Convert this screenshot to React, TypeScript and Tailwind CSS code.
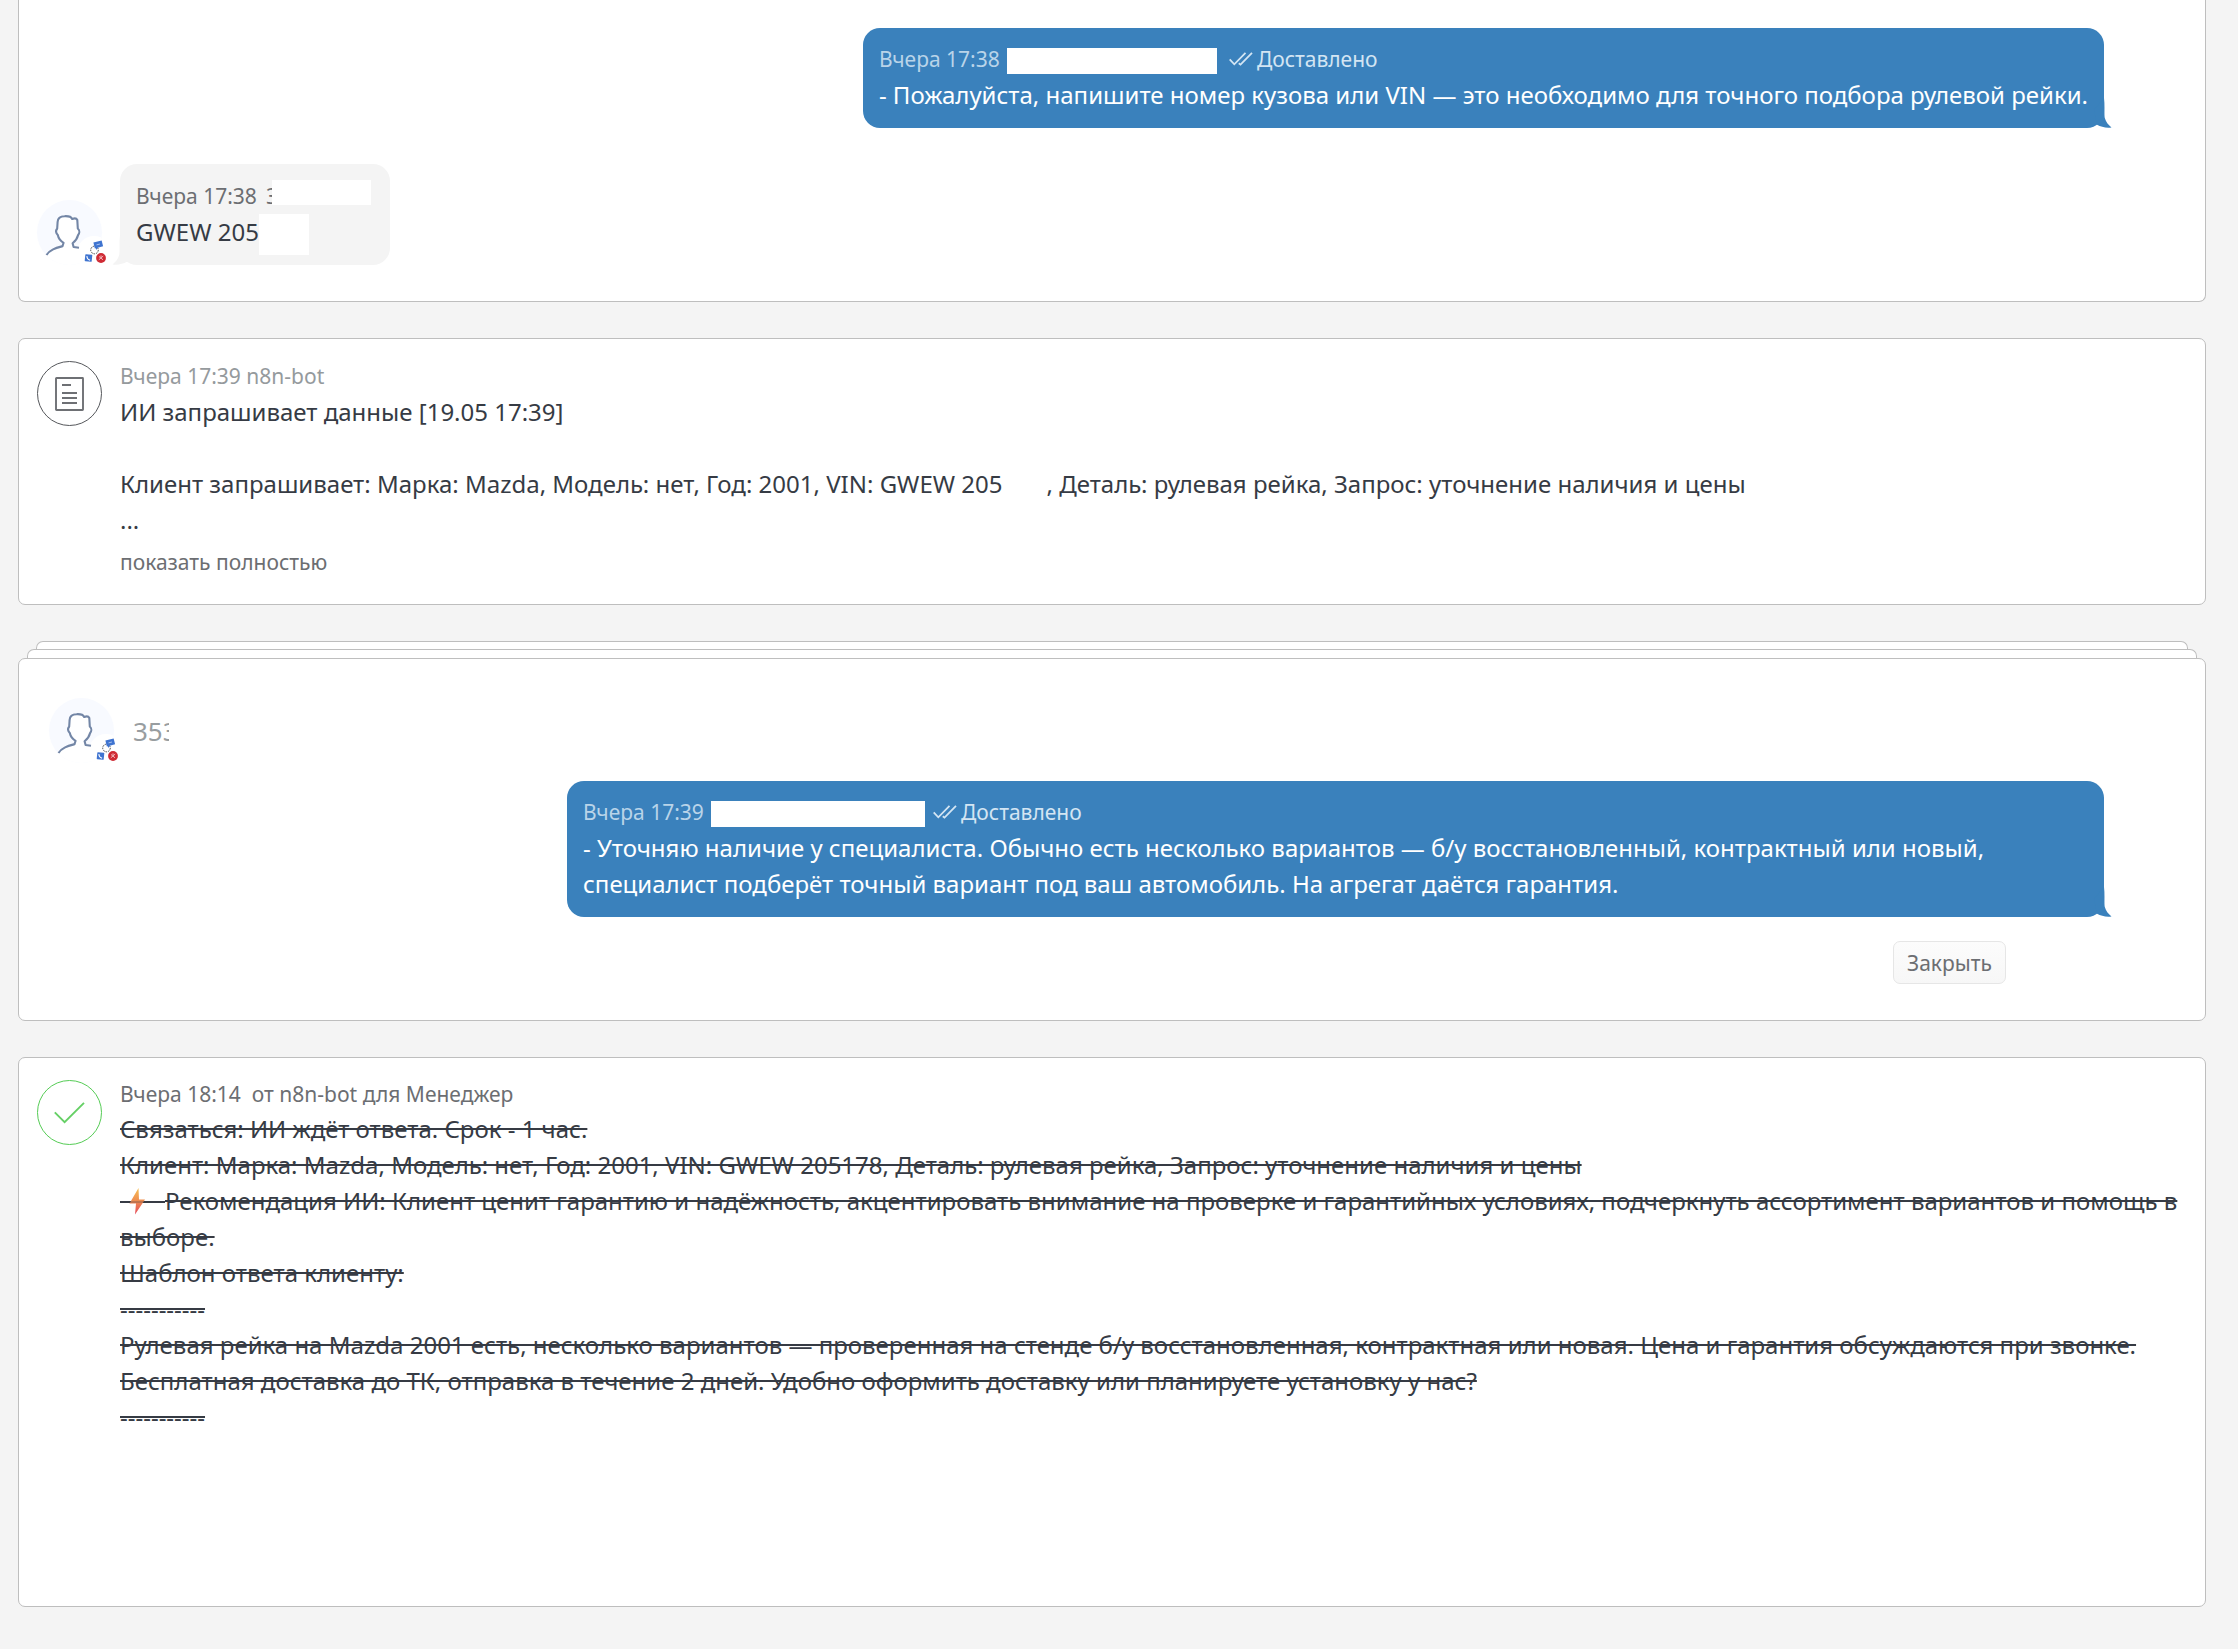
import type { ReactNode } from "react";

const CARD = "border border-[#bebebe] bg-white";

function Avatar() {
  return (
    <svg viewBox="0 0 70 65" className="h-[65px] w-[70px] shrink-0 overflow-visible" aria-hidden="true">
      <defs>
        <clipPath id="avatar-disc">
          <circle cx="32.5" cy="32.5" r="32.5" />
        </clipPath>
      </defs>
      <circle cx="32.5" cy="32.5" r="32.5" fill="#f8faff" />
      <g clipPath="url(#avatar-disc)">
        <path
          d="M9 55C13 49 20 48 26 46L26.5 43C23 41 21 38 20.5 34C18 31 19 29 20 28C20 22 20 16 28 16H35L40.500 19V28C43 30 43 33 41 35C40 39 38 41 35.500 43L36.500 47L46 49L66 66H9Z"
          fill="#fff"
        />
        <circle cx="57" cy="53" r="17" fill="#fff" />
      </g>
      <path
        d="M9.500 55C13 49.500 19 48 25.500 46.200L26.600 42.800C23.500 41 21.500 38.500 20.800 35C18.800 33 18.700 30.500 20.200 28.500L20.600 22C20.800 17.500 23.500 16.200 27.500 16.200C31 16 34 16.200 35.200 19C37 18.300 39.500 18.300 40.300 20L40.800 28.500C43 30.500 42.500 33.500 41 35.200C40.300 38.500 38.300 41 35.600 43.200L36.600 47L42 47.800"
        fill="none"
        stroke="#7386a6"
        strokeWidth="2.100"
        strokeLinejoin="round"
      />
      <circle cx="57.500" cy="50" r="3.800" fill="#fff" stroke="#333" strokeWidth="0.900" strokeDasharray="1.600 1" />
      <g transform="rotate(-14 61 44.500)">
        <path d="M57 41.500H65.500V47.500H60L58 49.500V47.500H57Z" fill="#3f74d0" />
        <path d="M59.500 44.500H63" stroke="#a9c2ee" strokeWidth="0.900" />
      </g>
      <g transform="rotate(6 51.500 58)">
        <rect x="48" y="54.500" width="7" height="7" rx="0.600" fill="#3f74d0" />
        <path d="M49.800 56.300C50 58.600 51.300 59.800 53.300 60" fill="none" stroke="#fff" strokeWidth="1.200" />
      </g>
      <circle cx="64" cy="58" r="4.900" fill="#cf2a34" />
      <path d="M61.800 59.800L66.200 56M62 56.500L66 59.800M64 55.400V57" stroke="#f4c5c8" strokeWidth="0.900" />
    </svg>
  );
}

function Tail({ side }: { side: "left" | "right" }) {
  return (
    <svg
      viewBox="0 0 24 30"
      aria-hidden="true"
      className={
        side === "right"
          ? "absolute -right-2 bottom-0 h-[30px] w-6 fill-[#3a81bc]"
          : "absolute bottom-0 -left-2 h-[30px] w-6 -scale-x-100 fill-[#f4f4f4]"
      }
    >
      <path d="M6 12L16 0C17 8 16 16 16.800 20C18 24 20 26.500 23.500 29.500C18 30.200 13 29 9 26.800Z" />
    </svg>
  );
}

function Delivered() {
  return (
    <span className="flex items-center gap-1 text-[#d3e5f3]">
      <svg viewBox="0 0 24 14" className="h-[14px] w-6 fill-none stroke-current" strokeWidth="1.800" aria-hidden="true">
        <path d="M0.700 7.300L5.300 12.300L16.500 0.800M9.800 11.200L11.500 12.600L23 0.800" />
      </svg>
      Доставлено
    </span>
  );
}

function OutgoingBubble({ time, mask, children }: { time: string; mask: ReactNode; children: ReactNode }) {
  return (
    <div className="relative mr-[101px] ml-auto w-fit max-w-[1537px] rounded-[17px] bg-[#3a81bc] px-4 pt-[13px] pb-[15px] text-white">
      <div className="flex h-9 text-[21px] leading-9 text-[#b9d4e9]">
        <span className="w-32">{time}</span>
        {mask}
        <Delivered />
      </div>
      <p>{children}</p>
      <Tail side="right" />
    </div>
  );
}

export default function App() {
  return (
    <main className="min-h-screen bg-[#f4f4f4] pr-8 pb-[42px] pl-[18px] font-['Noto_Sans',sans-serif] text-[24px] leading-9 text-[#363b44]">
      <section className={`${CARD} rounded-b-[7px] border-t-0 pt-7 pb-9 pl-[18px]`}>
        <OutgoingBubble time="Вчера 17:38" mask={<span className="mr-3 mb-[3px] h-[26px] w-[210px] self-end bg-white" />}>
          - Пожалуйста, напишите номер кузова или VIN — это необходимо для точного подбора рулевой рейки.
        </OutgoingBubble>

        <div className="mt-9 flex items-end gap-[13px]">
          <Avatar />
          <div className="relative w-[270px] rounded-[17px] bg-[#f4f4f4] px-4 pt-[14px] pb-[15px]">
            <div className="flex h-9 text-[21px] text-[#6c6e72]">
              <span className="w-[130px]">Вчера 17:38</span>
              <span className="w-[6px] overflow-hidden">3</span>
              <span className="mb-[9px] h-[25px] w-[99px] self-end bg-white" />
            </div>
            <div className="flex h-9">
              <span className="w-[123px] overflow-hidden whitespace-nowrap">GWEW 205</span>
              <span className="h-[41px] w-[50px] bg-white" />
            </div>
            <Tail side="left" />
          </div>
        </div>
      </section>

      <section className={`${CARD} mt-9 flex gap-[18px] rounded-[7px] px-[18px] pt-[19px] pb-6`}>
        <span className="mt-[3px] flex size-[65px] shrink-0 items-center justify-center rounded-full border border-[#55575b]">
          <svg viewBox="0 0 29 34" className="h-[34px] w-[29px] fill-none stroke-[#6e7074]" strokeWidth="1.900" aria-hidden="true">
            <rect x="1" y="1" width="27" height="32" rx="0.500" />
            <path d="M7 8H16M7 16H22M7 21H22M7 26H22" />
          </svg>
        </span>
        <div className="min-w-0">
          <div className="text-[21px] text-[#959a9d]">Вчера 17:39 n8n-bot</div>
          <p>ИИ запрашивает данные [19.05 17:39]</p>
          <p className="mt-9">
            Клиент запрашивает: Марка: Mazda, Модель: нет, Год: 2001, VIN: GWEW 205
            <span className="inline-block w-11" />, Деталь: рулевая рейка, Запрос: уточнение наличия и цены
          </p>
          <p>...</p>
          <button type="button" className="mt-[6px] block cursor-pointer text-[21px] text-[#6c6e72]">
            показать полностью
          </button>
        </div>
      </section>

      <div className="mx-[18px] mt-9 h-2 rounded-t-[7px] border border-b-0 border-[#bebebe] bg-white" />
      <div className="mx-[9px] h-[9px] rounded-t-[7px] border border-b-0 border-[#bebebe] bg-white" />
      <section className={`${CARD} rounded-[7px] pt-[39px] pb-9`}>
        <div className="mb-[18px] ml-[30px] flex items-center gap-[14px]">
          <Avatar />
          <span className="w-9 overflow-hidden text-[26px] text-[#989da0]">353</span>
        </div>
        <OutgoingBubble time="Вчера 17:39" mask={<span className="mr-2 mb-[3px] h-[26px] w-[214px] self-end bg-white" />}>
          - Уточняю наличие у специалиста. Обычно есть несколько вариантов — б/у восстановленный, контрактный или новый,
          специалист подберёт точный вариант под ваш автомобиль. На агрегат даётся гарантия.
        </OutgoingBubble>
        <button
          type="button"
          className="mt-6 mr-[199px] ml-auto block h-[43px] w-[113px] cursor-pointer rounded-[7px] border border-[#e6e6e6] bg-linear-to-b from-[#fcfcfc] to-[#f7f7f7] text-[21px] text-[#6c6e72]"
        >
          Закрыть
        </button>
      </section>

      <section className={`${CARD} mt-9 flex gap-[18px] rounded-[7px] pt-5 pr-6 pb-[171px] pl-[18px]`}>
        <span className="mt-[2px] flex size-[65px] shrink-0 items-center justify-center rounded-full border border-[#55cc55]">
          <svg viewBox="0 0 31 22" className="h-[22px] w-[31px] fill-none stroke-[#66d066]" strokeWidth="1.900" aria-hidden="true">
            <path d="M0.800 10.300L10.600 20.200L30 0.800" />
          </svg>
        </span>
        <div className="min-w-0">
          <div className="text-[21px] leading-[33px] whitespace-pre text-[#6c6e72]">{"Вчера 18:14  от n8n-bot для Менеджер"}</div>
          <div className="line-through decoration-2">
            <p>Связаться: ИИ ждёт ответа. Срок - 1 час.</p>
            <p>Клиент: Марка: Mazda, Модель: нет, Год: 2001, VIN: GWEW 205178, Деталь: рулевая рейка, Запрос: уточнение наличия и цены</p>
            <p>
              <svg viewBox="0 0 45 36" className="inline-block h-9 w-[45px] align-bottom" aria-label="Молния" role="img">
                <defs>
                  <linearGradient id="bolt" x1="0" y1="0" x2="0" y2="1">
                    <stop offset="0" stopColor="#f7c052" />
                    <stop offset="0.500" stopColor="#ee8a50" />
                    <stop offset="1" stopColor="#e5485a" />
                  </linearGradient>
                </defs>
                <path d="M0 19H45" stroke="#363b44" strokeWidth="2" />
                <path d="M18.500 5L9.500 20.500H16L15 31.500L25 16.500H19Z" fill="url(#bolt)" />
                <path d="M9 19H25" stroke="#363b44" strokeOpacity="0.500" strokeWidth="1" />
              </svg>
              Рекомендация ИИ: Клиент ценит гарантию и надёжность, акцентировать внимание на проверке и гарантийных условиях,
              подчеркнуть ассортимент вариантов и помощь в выборе.
            </p>
            <p>Шаблон ответа клиенту:</p>
            <p>-----------</p>
            <p>
              Рулевая рейка на Mazda 2001 есть, несколько вариантов — проверенная на стенде б/у восстановленная, контрактная или
              новая. Цена и гарантия обсуждаются при звонке.
            </p>
            <p>Бесплатная доставка до ТК, отправка в течение 2 дней. Удобно оформить доставку или планируете установку у нас?</p>
            <p>-----------</p>
          </div>
        </div>
      </section>
    </main>
  );
}
